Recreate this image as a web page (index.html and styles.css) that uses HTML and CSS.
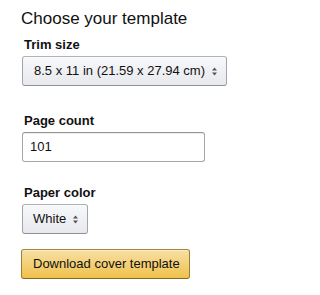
FILE: index.html
```html
<!DOCTYPE html>
<html lang="en">
<head>
<meta charset="utf-8">
<title>Choose your template</title>
<link rel="stylesheet" href="styles.css">
</head>
<body>
<div class="page">
  <h2 class="title">Choose your template</h2>

  <div class="field field-trim">
    <div class="label">Trim size</div>
    <div class="dropdown dropdown-trim">
      <span class="dropdown-text">8.5 x 11 in (21.59 x 27.94 cm)</span>
      <svg class="arrows" width="5" height="9" viewBox="0 0 5 9"><path d="M0 3.5 L2.5 0.5 L5 3.5 Z M0 5.5 L2.5 8.5 L5 5.5 Z" fill="#555"/></svg>
    </div>
  </div>

  <div class="field field-count">
    <div class="label">Page count</div>
    <div class="input">101</div>
  </div>

  <div class="field field-color">
    <div class="label">Paper color</div>
    <div class="dropdown dropdown-color">
      <span class="dropdown-text">White</span>
      <svg class="arrows" width="5" height="9" viewBox="0 0 5 9"><path d="M0 3.5 L2.5 0.5 L5 3.5 Z M0 5.5 L2.5 8.5 L5 5.5 Z" fill="#555"/></svg>
    </div>
  </div>

  <div class="button">Download cover template</div>
</div>
</body>
</html>
```

FILE: styles.css
```css
html, body {
  margin: 0;
  padding: 0;
  background: #fff;
}

body {
  font-family: "Liberation Sans", Arial, sans-serif;
  color: #111;
  font-size: 13px;
}

.page {
  display: flex;
  flex-direction: column;
  align-items: flex-start;
  padding: 9px 0 0 22px;
}

.title {
  margin: 0 0 0 -1px;
  font-size: 17px;
  line-height: 20px;
  font-weight: normal;
  color: #111;
}

.field {
  display: flex;
  flex-direction: column;
  align-items: flex-start;
  gap: 2px;
}

.field-trim { margin-top: 6px; }
.field-count { margin-top: 25px; }
.field-color { margin-top: 21px; }

.label {
  font-weight: bold;
  font-size: 13px;
  line-height: 19px;
  padding-left: 2px;
}

.dropdown {
  box-sizing: border-box;
  height: 30px;
  display: flex;
  align-items: center;
  padding: 0 9px 0 11px;
  border: 1px solid;
  border-color: #adb1b8 #a2a6ac #8d9096;
  border-radius: 3px;
  background: linear-gradient(to bottom, #f7f8fa, #e7e9ec);
  box-shadow: 0 1px 0 rgba(255,255,255,.6) inset;
  line-height: 28px;
}

.dropdown-trim { width: 205px; }
.dropdown-color { width: 66px; padding-left: 10px; }

.dropdown-text {
  white-space: nowrap;
}

.arrows {
  margin-left: auto;
  flex: none;
}

.input {
  box-sizing: border-box;
  width: 183px;
  height: 30px;
  padding: 0 7px;
  line-height: 28px;
  border: 1px solid #a6a6a6;
  border-top-color: #949494;
  border-radius: 3px;
  box-shadow: 0 1px 0 rgba(255,255,255,.5), 0 1px 0 rgba(0,0,0,.07) inset;
  background: #fff;
}

.button {
  box-sizing: border-box;
  margin-top: 15px;
  margin-left: -1px;
  width: 169px;
  height: 30px;
  line-height: 28px;
  padding: 0 9px 0 11px;
  white-space: nowrap;
  border: 1px solid;
  border-color: #a88734 #9c7e31 #846a29;
  border-radius: 3px;
  background: linear-gradient(to bottom, #f7dfa5, #f0c14b);
  box-shadow: 0 1px 0 rgba(255,255,255,.4) inset;
  color: #111;
}
```
